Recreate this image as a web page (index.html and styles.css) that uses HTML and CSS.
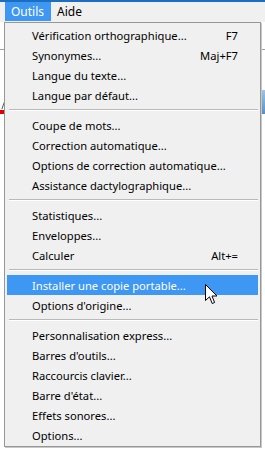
FILE: index.html
```html
<!DOCTYPE html>
<html lang="fr">
<head>
    <meta charset="UTF-8">
    <meta name="viewport" content="width=device-width, initial-scale=1.0">
    <title>Outils</title>
    <link rel="stylesheet" href="styles.css">
</head>
<body>
    <div class="titlebar"></div>
    <div class="menubar">
        <span class="menubar-item active">Outils</span>
        <span class="menubar-item">Aide</span>
    </div>
    <div class="document">
        <div class="doc-line"></div>
        <div class="doc-mark"></div>
        <div class="doc-red"></div>
        <div class="doc-picture"></div>

        <ul class="menu">
            <li class="item"><span>Vérification orthographique...</span><span class="key">F7</span></li>
            <li class="item"><span>Synonymes...</span><span class="key">Maj+F7</span></li>
            <li class="item"><span>Langue du texte...</span></li>
            <li class="item"><span>Langue par défaut...</span></li>
            <li class="sep"></li>
            <li class="item"><span>Coupe de mots...</span></li>
            <li class="item"><span>Correction automatique...</span></li>
            <li class="item"><span>Options de correction automatique...</span></li>
            <li class="item"><span>Assistance dactylographique...</span></li>
            <li class="sep"></li>
            <li class="item"><span>Statistiques...</span></li>
            <li class="item"><span>Enveloppes...</span></li>
            <li class="item"><span>Calculer</span><span class="key">Alt+=</span></li>
            <li class="sep"></li>
            <li class="item hover"><span>Installer une copie portable...</span></li>
            <li class="item"><span>Options d'origine...</span></li>
            <li class="sep"></li>
            <li class="item"><span>Personnalisation express...</span></li>
            <li class="item"><span>Barres d'outils...</span></li>
            <li class="item"><span>Raccourcis clavier...</span></li>
            <li class="item"><span>Barre d'état...</span></li>
            <li class="item"><span>Effets sonores...</span></li>
            <li class="item"><span>Options...</span></li>
        </ul>

        <!-- mouse pointer -->
        <svg class="cursor" width="13" height="21" viewBox="0 0 13 21">
            <path d="M0.5 0.5 L0.5 16.5 L4.5 12.8 L7.2 19.5 L9.6 18.5 L7 12 L12 12 Z" fill="#fff" stroke="#000" stroke-width="1" stroke-linejoin="miter"/>
        </svg>
    </div>
</body>
</html>
```

FILE: styles.css
```css
body {
    margin: 0;
    font-family: 'Segoe UI', 'Noto Sans', sans-serif;
    font-size: 11.2px;
    color: #000;
    background-color: #f0f0f0;
    width: 265px;
    height: 452px;
    overflow: hidden;
}
.titlebar {
    height: 2px;
    background-color: #1b6ec2;
}
.menubar {
    height: 19px;
    display: flex;
    align-items: stretch;
    padding-left: 5px;
    background-color: #f0f0f0;
    border-bottom: 1px solid #f0f0f0;
}
.menubar-item {
    display: flex;
    align-items: center;
    padding: 0 6px 0 6px;
    font-size: 12px;
}
.menubar-item.active {
    background-color: #3d97f3;
    color: #fff;
    padding-right: 7px;
}
.document {
    position: relative;
    height: 430px;
    background-color: #fff;
}
.doc-line {
    height: 27px;
    border-bottom: 1px solid #a0a0a0;
}
.doc-mark {
    position: absolute;
    left: 0;
    top: 78px;
    width: 3px;
    height: 9px;
    border-right: 1px solid #555;
    transform: skewX(-20deg);
}
.doc-red {
    position: absolute;
    left: 0;
    top: 88px;
    width: 4px;
    height: 4px;
    background-color: #e00000;
}
.doc-picture {
    position: absolute;
    right: 0;
    top: 68px;
    width: 4px;
    height: 24px;
    background: linear-gradient(#9cc4e4, #5a8fc4);
}
.menu {
    position: absolute;
    left: 4px;
    top: 0;
    width: 251px;
    margin: 0;
    padding: 2px 2px 1px 2px;
    list-style: none;
    background-color: #f0f0f0;
    border: 1px solid #979797;
    box-shadow: 1px 1px 0 #c8c8c8;
}
.item {
    height: 20px;
    display: flex;
    align-items: center;
    justify-content: space-between;
    padding: 0 20px 0 25px;
    white-space: nowrap;
}
.item.hover {
    background-color: #3d97f3;
    color: #fff;
}
.sep {
    height: 10px;
    display: flex;
    align-items: center;
    padding: 0 0 0 2px;
}
.sep::before {
    content: "";
    flex: 1;
    border-top: 1px solid #b9b9b9;
    border-bottom: 1px solid #fff;
}
.cursor {
    position: absolute;
    left: 205px;
    top: 262px;
}
```
